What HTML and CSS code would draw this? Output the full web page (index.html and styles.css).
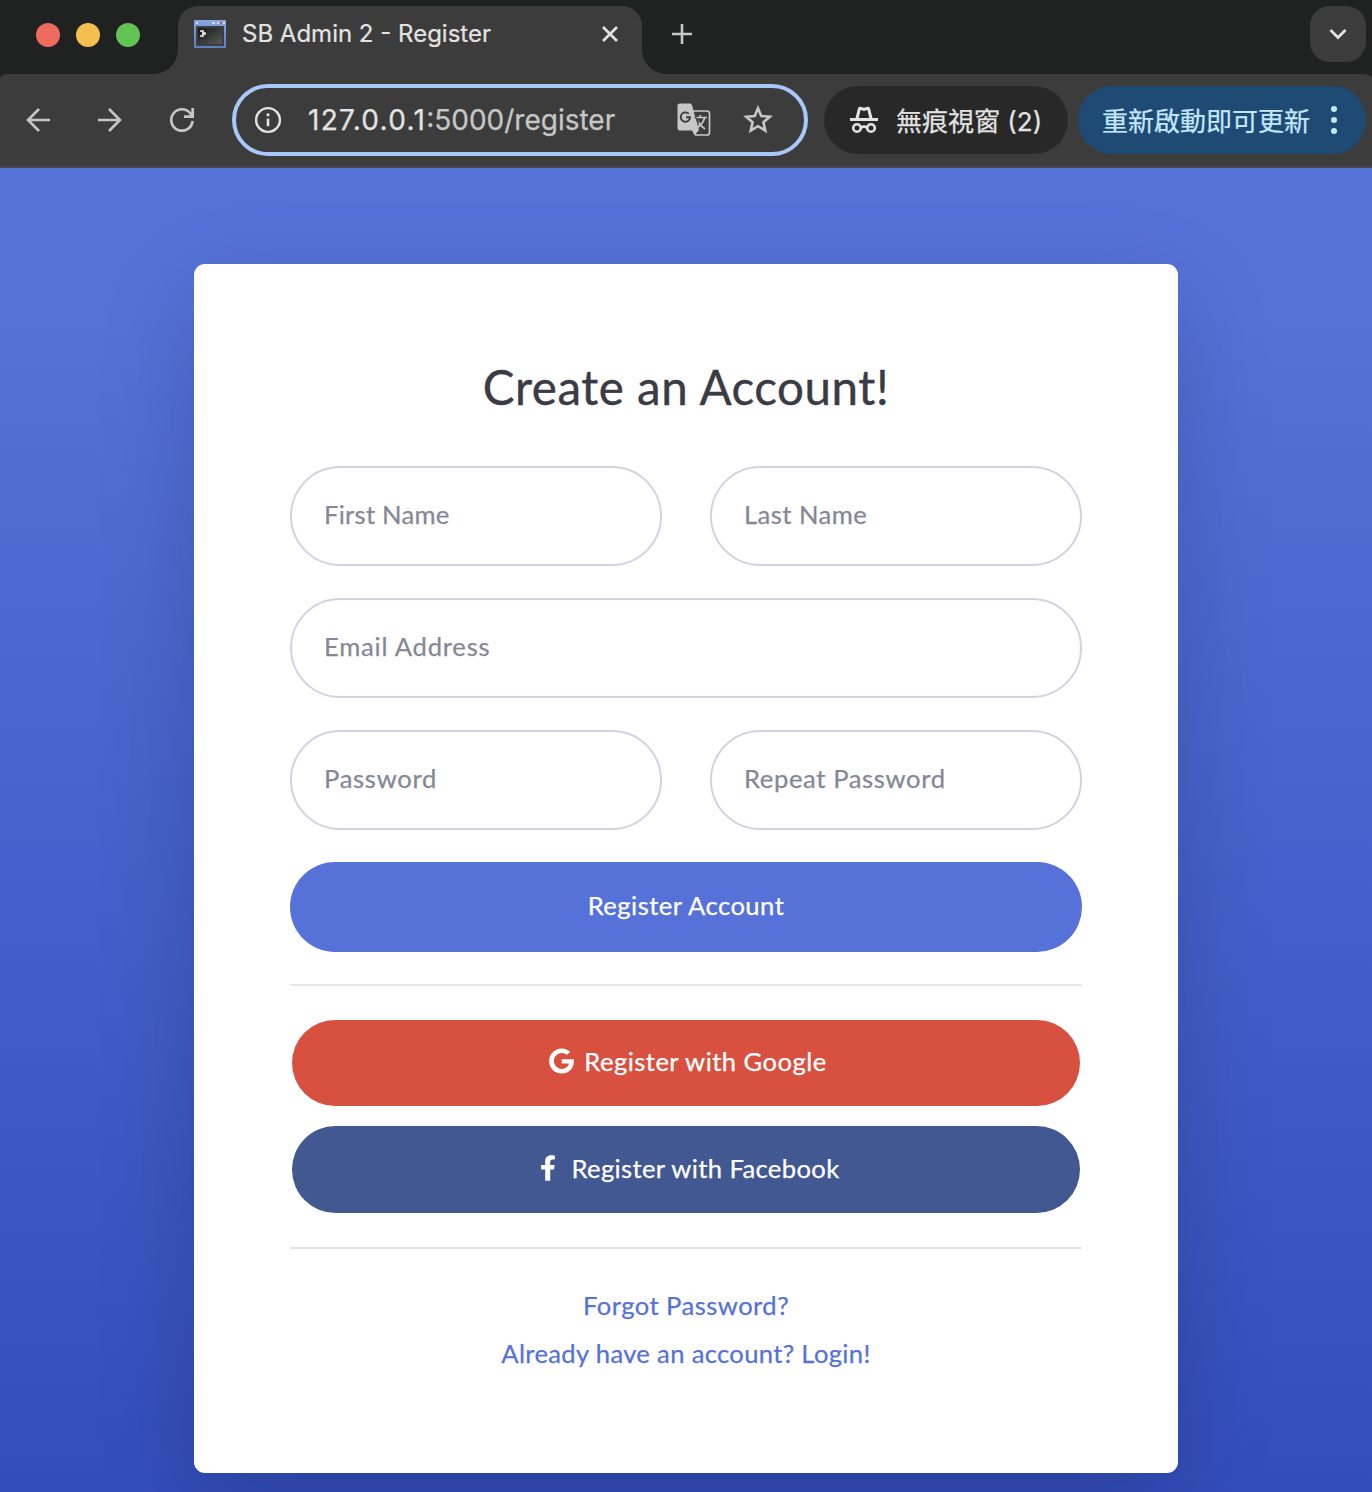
FILE: index.html
```html
<!DOCTYPE html>
<html lang="zh-Hant">
<head>
<meta charset="utf-8">
<title>SB Admin 2 - Register</title>
<link rel="stylesheet" href="styles.css">
</head>
<body>
<header class="tabstrip">
  <div class="lights"><i class="light red"></i><i class="light yellow"></i><i class="light green"></i></div>
  <div class="tab">
    <svg class="favicon" width="32" height="28" viewBox="0 0 32 28">
      <defs>
        <linearGradient id="frame" x2="0" y2="1"><stop stop-color="#86a8e0"/><stop offset="1" stop-color="#5d7fb9"/></linearGradient>
        <linearGradient id="screen" x2="1" y2="1"><stop stop-color="#151515"/><stop offset="1" stop-color="#5a5a5a"/></linearGradient>
      </defs>
      <path fill="url(#frame)" d="M0 0h32v28H0z"/>
      <path fill="#cbd9f1" d="M2 2h2v2H2zM18 2h3v2h-3zM23 2h2v2h-2zM29 2h2v2h-2z"/>
      <path fill="#e8613f" d="M26 2h2v2h-2z"/>
      <path fill="#3b3e45" d="M2 6h28v20H2z"/>
      <path fill="url(#screen)" d="M4 8h24v16H4z"/>
      <path d="M6 11h3v2h2v1H9v2H6M9 13h2" fill="none" stroke="#f2f2f2" stroke-width="1.6"/>
    </svg>
    <span class="tab-title">SB Admin 2 - Register</span>
    <svg class="close" width="16" height="16" viewBox="0 0 16 16"><path d="M1 1l14 14M15 1L1 15" stroke="#e3e3e3" stroke-width="2.7"/></svg>
  </div>
  <svg class="plus" width="20" height="20" viewBox="0 0 20 20"><path d="M10 0v20M0 10h20" stroke="#c7c7c7" stroke-width="2.6"/></svg>
  <div class="tab-search"><svg width="18" height="12" viewBox="0 0 18 12"><path d="M1.5 2L9 9.5 16.5 2" fill="none" stroke="#e3e3e3" stroke-width="2.8"/></svg></div>
</header>
<div class="toolbar-wrap">
<nav class="toolbar">
  <svg class="nav-icon" width="26" height="26" viewBox="0 0 26 26"><path d="M25 13H3M14 2L3 13l11 11" fill="none" stroke="#c7c7c7" stroke-width="2.6"/></svg>
  <svg class="nav-icon" width="26" height="26" viewBox="0 0 26 26"><path d="M1 13h22M12 2l11 11-11 11" fill="none" stroke="#c7c7c7" stroke-width="2.6"/></svg>
  <svg class="nav-icon" width="26" height="26" viewBox="0 0 26 26"><path d="M23.6 14A10.7 10.7 0 1 1 21.5 6.5L23.5 9M23.7 1v8.7H15" fill="none" stroke="#c7c7c7" stroke-width="2.7"/></svg>
  <div class="address">
    <svg width="28" height="28" viewBox="0 0 28 28"><circle cx="14" cy="14" r="11.9" fill="none" stroke="#e3e3e3" stroke-width="2.4"/><path d="M14 12.6v7.6" stroke="#e3e3e3" stroke-width="2.6"/><circle cx="14" cy="8.8" r="1.6" fill="#e3e3e3"/></svg>
    <span class="url"><b class="host">127.0.0.1</b>:5000/register</span>
    <svg class="translate" width="34" height="34" viewBox="0 0 34 34">
      <path d="M16 8h14a2.5 2.5 0 0 1 2.5 2.5v19A2.5 2.5 0 0 1 30 32H18" fill="none" stroke="#c7c7c7" stroke-width="1.7"/>
      <path d="M3 .5h10a2 2 0 0 1 1.9 1.5L22 27l-4.5 5.5L15 27.5H3a2.5 2.5 0 0 1-2.5-2.5V3A2.5 2.5 0 0 1 3 .5z" fill="#c7c7c7"/>
      <path d="M13.8 14.3H9.1M13.1 14.5a4.7 4.7 0 1 1-1.4-3.8" fill="none" stroke="#3c3c3c" stroke-width="1.9"/>
      <path d="M18 14.5h12M23.2 12v2.5M27.5 15c-1 4.5-4.5 8-8.5 10.5M20.5 18c1.8 3.3 4.3 5.8 7.5 8" fill="none" stroke="#c7c7c7" stroke-width="1.7"/>
      <path d="M17.6 14.5h2M20.3 18l1.2 2.1" fill="none" stroke="#3c3c3c" stroke-width="1.4"/>
    </svg>
    <svg class="star" width="30" height="30" viewBox="0 0 30 30"><path d="M15 3.2l3.3 7.8 8.5.7-6.4 5.6 1.9 8.3-7.3-4.4-7.3 4.4 1.9-8.3-6.4-5.6 8.5-.7z" fill="none" stroke="#c7c7c7" stroke-width="2.6"/></svg>
  </div>
  <div class="chip incognito">
    <svg width="30" height="28" viewBox="0 0 30 28"><path d="M6.5 12L9 2.3Q9.5.5 11.2.8L15 1.8 18.8.8Q20.5.5 21 2.3L23.5 12H29v3H1v-3zM9.7 12h10.6L18.4 4 15 4.9 11.6 4z" fill="#e3e3e3"/><g fill="none" stroke="#e3e3e3" stroke-width="2.6"><circle cx="8" cy="22" r="3.8"/><circle cx="22" cy="22" r="3.8"/><path d="M11.8 21.5Q15 19.8 18.2 21.5"/></g></svg>
    <span class="chip-text">無痕視窗 (2)</span>
  </div>
  <div class="chip update">
    <span class="chip-text">重新啟動即可更新</span>
    <svg width="6" height="28" viewBox="0 0 6 28"><g fill="#c2e7ff"><circle cx="3" cy="3" r="3"/><circle cx="3" cy="14" r="3"/><circle cx="3" cy="25" r="3"/></g></svg>
  </div>
</nav>
</div>
<main class="page">
  <section class="card">
    <h1 class="title">Create an Account!</h1>
    <form>
      <div class="row">
        <input class="field first" type="text" placeholder="First Name">
        <input class="field last" type="text" placeholder="Last Name">
      </div>
      <div class="row"><input class="field email" type="text" placeholder="Email Address"></div>
      <div class="row">
        <input class="field pass" type="password" placeholder="Password">
        <input class="field repeat" type="password" placeholder="Repeat Password">
      </div>
      <a class="btn primary">Register Account</a>
      <hr>
      <a class="btn google"><svg class="g-icon" width="25" height="26" viewBox="0 0 488 512"><path fill="#fff" d="M488 261.800C488 403.300 391.100 504 248 504 110.800 504 0 393.200 0 256S110.800 8 248 8c66.800 0 123 24.500 166.300 64.900l-67.500 64.900C258.500 52.600 94.300 116.600 94.300 256c0 86.500 69.100 156.600 153.700 156.600 98.200 0 135-70.400 140.800-106.900H248v-85.300h236.100c2.300 12.700 3.900 24.900 3.900 41.400z"/></svg><span>Register with Google</span></a>
      <a class="btn facebook"><svg class="f-icon" width="16" height="26" viewBox="0 0 320 512"><path fill="#fff" d="M279.140 288l14.220-92.660h-88.910v-60.130c0-25.350 12.420-50.060 52.240-50.060h40.420V6.260S260.430 0 225.360 0c-73.220 0-121.080 44.380-121.080 124.720v70.620H22.890V288h81.390v224h100.170V288z"/></svg><span>Register with Facebook</span></a>
    </form>
    <hr>
    <div class="links"><a class="forgot">Forgot Password?</a><a class="login">Already have an account? Login!</a></div>
  </section>
</main>
</body>
</html>
```
FILE: styles.css
```css
* { box-sizing: border-box; }
html, body { margin: 0; height: 1492px; overflow: hidden; }
body { font-family: Lato, "Open Sans", sans-serif; font-size: 25.6px; background: #3c3c3c; }
svg { display: block; flex: none; }

.tabstrip { display: flex; height: 74px; padding: 6px 6px 0 36px; background: #202221; }
.lights { display: flex; gap: 16px; width: 142px; padding-top: 17px; }
.light { width: 24px; height: 24px; border-radius: 50%; }
.red { background: #ed6a5f; }
.yellow { background: #f5bf4f; }
.green { background: #61c555; }
.tab { position: relative; display: flex; align-items: center; width: 464px; padding: 0 24px 12px 16px; border-radius: 20px 20px 0 0; background: #3c3c3c; }
.tab::before, .tab::after { content: ""; position: absolute; bottom: 0; width: 24px; height: 24px; }
.tab::before { left: -24px; background: radial-gradient(circle at 0 0, transparent 23.5px, #3c3c3c 24px); }
.tab::after { right: -24px; background: radial-gradient(circle at 100% 0, transparent 23.5px, #3c3c3c 24px); }
.tab-title { flex: 1; margin-left: 16px; font: 24px/30px Inter, sans-serif; color: #e3e3e3; white-space: nowrap; -webkit-text-stroke: .2px; }
.plus { margin: 18px 0 0 30px; }
.tab-search { display: flex; align-items: center; justify-content: center; width: 56px; height: 56px; margin-left: auto; border-radius: 20px; background: #3c3c3c; }

.toolbar-wrap { background: #202221; }
.toolbar { display: flex; align-items: center; height: 94px; padding: 0 6px 0 25px; border-bottom: 2px solid #474747; border-radius: 10px 10px 0 0 / 4px 4px 0 0; background: #3c3c3c; font-family: Inter, "Noto Sans CJK TC", sans-serif; -webkit-text-stroke: .25px; }
.nav-icon { margin-right: 46px; }
.nav-icon:nth-child(3) { margin-right: 37px; }
.address { display: flex; align-items: center; width: 576px; height: 72px; padding: 0 31px 0 18px; border: 4px solid #a8c7fa; border-radius: 36px; }
.url { flex: 1; margin-left: 26px; font-size: 28px; line-height: 36px; letter-spacing: 0; color: #c7c7c7; }
.host { font-weight: 400; letter-spacing: 1.3px; color: #e3e3e3; }
.translate { margin-right: 32px; }
.chip { display: flex; align-items: center; height: 68px; border-radius: 34px; font-size: 26px; line-height: 36px; white-space: nowrap; }
.chip-text { padding-top: 3px; }
.incognito { width: 244px; margin-left: 16px; padding-left: 25px; gap: 17px; background: #282828; color: #e3e3e3; }
.update { width: 288px; margin-left: 10px; padding-left: 24px; gap: 21px; background: #1f4a73; color: #c2e7ff; }

.page { height: 1324px; padding-top: 96px; overflow: hidden; background: linear-gradient(180deg, #5572d8 140px, #314bb9 1401px); }
.card { width: 984px; height: 1209px; margin: 0 auto; padding: 94px 96px 0; border-radius: 11px; background: #fff; box-shadow: 0 32px 96px rgba(0, 0, 0, .175); -webkit-text-stroke: .25px; }
.title { margin: 0 0 50px; font-size: 47.5px; font-weight: 400; line-height: 58px; letter-spacing: .55px; text-align: center; color: #3a3b45; -webkit-text-stroke: .4px; }
.row { display: flex; gap: 48px; margin-bottom: 32px; }
.field { flex: 1; min-width: 0; height: 100px; padding: 0 32px 5px; border: 2px solid #d1d3e2; border-radius: 50px; outline: 0; background: #fff; font-family: inherit; font-size: 25.6px; -webkit-text-stroke: .25px; }
.field::placeholder { color: #858796; opacity: 1; }
.first { letter-spacing: .25px; }
.last { letter-spacing: .45px; }
.email { letter-spacing: .78px; }
.pass { letter-spacing: .7px; }
.repeat { letter-spacing: .62px; }
.btn { display: flex; align-items: center; justify-content: center; height: 90.4px; padding-bottom: 4px; border-radius: 46px; color: #fff; line-height: 38px; letter-spacing: .45px; }
.primary { background: #5672d8; }
.google { height: 86px; margin: 34px 2px 20px; padding-left: 4px; background: #d85140; }
.facebook { height: 86.8px; margin: 0 2px 34px; padding-left: 8px; background: #425891; letter-spacing: .36px; }
.g-icon { margin-right: 10px; }
.f-icon { margin-right: 15px; }
hr { height: 2px; margin: 32px 0; border: 0; background: #e6e6e8; }
.links { display: flex; flex-direction: column; align-items: center; line-height: 48px; color: #5572d8; }
.forgot { letter-spacing: .45px; }
.login { letter-spacing: .33px; }
```
